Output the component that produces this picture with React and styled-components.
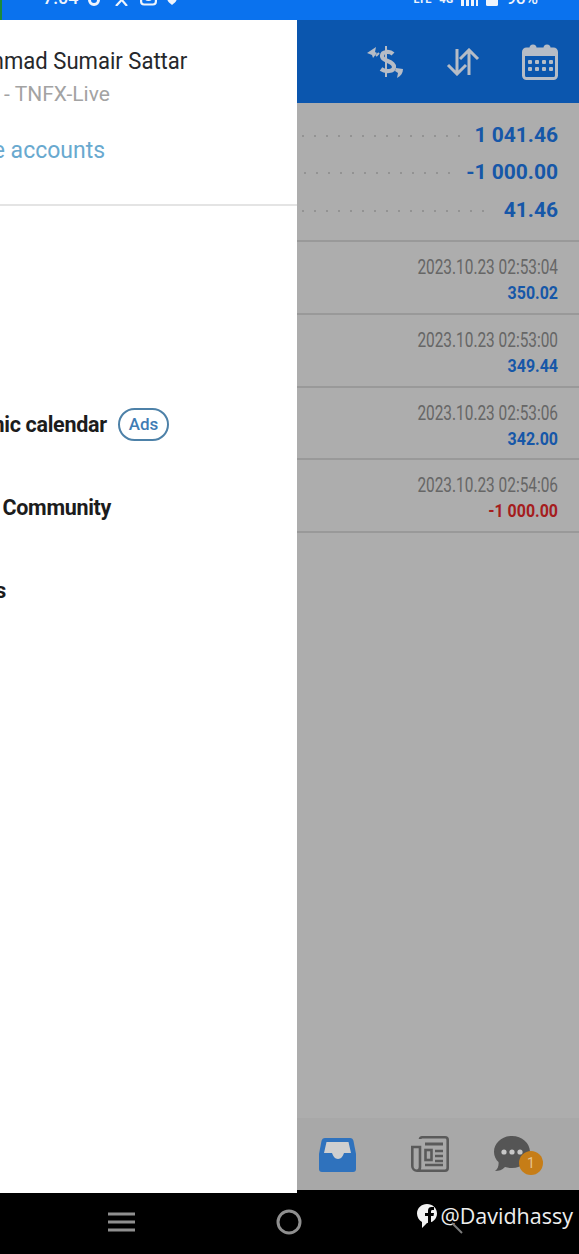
import React from 'react'
import styled, { createGlobalStyle } from 'styled-components'

const GlobalStyle = createGlobalStyle`
  html, body { margin: 0; padding: 0; background: #000; }
  body { font-family: Roboto, "Liberation Sans", sans-serif; }
`

const Screen = styled.div`
  width: 579px;
  height: 1254px;
  overflow: hidden;
  display: flex;
  flex-direction: column;
  background: #000;
`

const StatusBar = styled.div`
  height: 20px;
  flex: none;
  box-sizing: border-box;
  background: #0a72ee;
  border-left: 2px solid #1c8a3c;
  color: #eef4fc;
  display: flex;
  justify-content: space-between;
  overflow: hidden;
`

const StatusGroup = styled.div`
  display: flex;
  align-items: flex-end;
  gap: ${p => p.$right ? 8 : 10}px;
  height: 6px;
  padding: ${p => p.$right ? '0 41px 0 0' : '0 0 0 41px'};
`

const Clock = styled.span`
  font-size: 18px;
  font-weight: 500;
  line-height: 16px;
`

const NetLabel = styled.span`
  font-size: 11px;
  font-weight: 700;
  line-height: 12px;
`

const Percent = styled.span`
  font-size: 17px;
  font-weight: 500;
  line-height: 16px;
`

const Stage = styled.div`
  display: flex;
  height: 1173px;
  flex: none;
  overflow: hidden;
`

const Drawer = styled.aside`
  width: 368px;
  margin-left: -71px;
  flex: none;
  background: #fff;
  display: flex;
  flex-direction: column;
`

const Profile = styled.div`
  height: 186px;
  flex: none;
  border-bottom: 2px solid #e4e4e4;
  box-sizing: border-box;
  padding: 27px 0 0 0;
  margin-bottom: 11px;
  display: flex;
  flex-direction: column;
  align-items: flex-start;
`

const Name = styled.div`
  font-size: 23px;
  line-height: 30px;
  color: #26282b;
  transform: scaleX(.96);
  transform-origin: left;
  white-space: nowrap;
`

const Server = styled.div`
  font-size: 21px;
  line-height: 30px;
  margin: 2px 0 0 -1px;
  color: #a3a3a3;
  white-space: nowrap;
`

const Manage = styled.div`
  font-size: 23px;
  line-height: 30px;
  margin: 27px 0 0 -7px;
  color: #69a9cf;
  white-space: nowrap;
`

const MenuRow = styled.div`
  height: 83px;
  display: flex;
  align-items: center;
  gap: 11px;
  margin-left: ${p => p.$shift || -1}px;
  font-size: 21.5px;
  font-weight: 700;
  letter-spacing: -.3px;
  color: #1c1c1c;
  white-space: nowrap;
`

const Ads = styled.span`
  border: 2px solid #4d81a8;
  border-radius: 17px;
  color: #3f7cb4;
  font-size: 17px;
  font-weight: 500;
  letter-spacing: 0;
  padding: 5px 9px;
  line-height: 19px;
`

const Main = styled.main`
  flex: 1;
  min-width: 0;
  margin-bottom: 3px;
  display: flex;
  flex-direction: column;
  background: #adadad;
`

const Header = styled.header`
  height: 83px;
  flex: none;
  background: #0b56ae;
  display: flex;
  align-items: center;
  justify-content: flex-end;
  gap: 42px;
  padding: 0 21px 0 0;
  box-sizing: border-box;
`

const Summary = styled.section`
  padding: 13px 21px 0 0;
  height: 139px;
  box-sizing: border-box;
  border-bottom: 2px solid #999;
`

const SummaryRow = styled.div`
  display: flex;
  align-items: center;
  height: 37.5px;
`

const Dots = styled.div`
  flex: 1;
  margin: 2px 13px 0 ${p => p.$start}px;
  height: 2px;
  background-image: radial-gradient(circle, #939393 1px, transparent 1.2px);
  background-size: 12px 2px;
`

const SummaryValue = styled.div`
  font-size: 21px;
  font-weight: 700;
  color: #1657a8;
`

const Deal = styled.div`
  height: 72.75px;
  box-sizing: border-box;
  border-bottom: 2px solid #999;
  padding: 13px 21px 0 0;
  text-align: right;
`

const DealTime = styled.div`
  font-size: 19.5px;
  line-height: 25px;
  color: #666;
  transform: scaleX(.79);
  transform-origin: right;
`

const DealValue = styled.div`
  font-size: 19px;
  font-weight: 700;
  line-height: 26px;
  color: ${p => p.$loss ? '#a51d1d' : '#1657a8'};
  transform: scaleX(.84);
  transform-origin: right;
`

const Spacer = styled.div`
  flex: 1;
`

const TabBar = styled.nav`
  height: 72px;
  flex: none;
  background: #a8a8a8;
  display: grid;
  grid-template-columns: 92px 82px 1fr;
  align-items: center;
  padding: 0 0 0 22px;
  box-sizing: border-box;
`

const ChatWrap = styled.div`
  position: relative;
  width: 38px;
  height: 36px;
`

const Badge = styled.span`
  position: absolute;
  right: -12px;
  bottom: -3px;
  width: 24px;
  height: 24px;
  border-radius: 50%;
  background: #c67d17;
  color: #e6c48f;
  font-size: 14px;
  line-height: 24px;
  text-align: center;
`

const NavBar = styled.div`
  flex: 1;
  position: relative;
  display: flex;
  align-items: center;
  padding: 0 0 3px 108px;
  gap: 141px;
`

const Watermark = styled.div`
  position: absolute;
  right: 6px;
  top: 7px;
  display: flex;
  align-items: center;
  gap: 3px;
  color: #eee;
  font-family: "Open Sans", sans-serif;
  font-size: 21.5px;
  line-height: 32px;
`

const SearchHandle = styled.svg`
  position: absolute;
  left: 34px;
  top: 22px;
`

const RingIcon = () => (
  <svg width="12" height="12" viewBox="0 0 12 12" fill="none" stroke="#eef4fc" strokeWidth="3">
    <circle cx="6" cy="6" r="4.5" />
  </svg>
)

const XIcon = () => (
  <svg width="20" height="14" viewBox="0 0 20 14" fill="none" stroke="#eef4fc" strokeWidth="2.2">
    <path d="M5 0l12 14M19 0L6 14" />
  </svg>
)

const CameraIcon = () => (
  <svg width="17" height="14" viewBox="0 0 17 14" fill="none" stroke="#eef4fc" strokeWidth="2.2">
    <rect x="1.1" y="-4" width="14.800" height="16.500" rx="3" />
    <circle cx="8.500" cy="5" r="3" />
  </svg>
)

const ShieldIcon = () => (
  <svg width="10" height="12" viewBox="0 0 10 12">
    <path d="M0 0h10v4c0 3-2.500 5-5 7-2.500-2-5-4-5-7z" fill="#eef4fc" />
  </svg>
)

const SignalIcon = () => (
  <svg width="17" height="12" viewBox="0 0 17 12" fill="#eef4fc">
    <rect x="0" y="6" width="3" height="6" />
    <rect x="5" y="3" width="3" height="9" />
    <rect x="10" y="0" width="3" height="12" />
    <rect x="15" y="0" width="2" height="12" />
  </svg>
)

const BatteryIcon = () => (
  <svg width="12" height="14" viewBox="0 0 12 14">
    <rect width="12" height="14" rx="1.500" fill="#eef4fc" />
  </svg>
)

const DollarIcon = () => (
  <svg width="37" height="32" viewBox="0 0 37 32" fill="none" stroke="#b6bcc6">
    <path d="M0 7l9-6-1 5 2 1-4 5-1-3z" fill="#b6bcc6" stroke="none" />
    <path d="M9 10l3-3" strokeWidth="2" />
    <path d="M26 8c-3-3-11-3-11 2 0 6 12 4 12 11 0 5-9 5-13 2" strokeWidth="4.200" />
    <path d="M19 0v31" strokeWidth="2" />
    <path d="M29 22l7 1c0 4-2 7-6 9l1-5-3-2z" fill="#b6bcc6" stroke="none" />
  </svg>
)

const SortIcon = () => (
  <svg width="34" height="28" viewBox="0 0 34 28" fill="none" stroke="#b6bcc6" strokeWidth="3">
    <path d="M11 1v25M2 17l9 9 9-9" />
    <path d="M23 27V2M14 11l9-9 9 9" />
  </svg>
)

const CalendarIcon = () => (
  <svg width="36" height="36" viewBox="0 0 36 36">
    <rect x="1.500" y="5" width="33" height="29.500" rx="3" fill="none" stroke="#b6bcc6" strokeWidth="3" />
    <rect x="1.500" y="5" width="33" height="7" fill="#b6bcc6" />
    <circle cx="11" cy="4" r="3.500" fill="#b6bcc6" />
    <circle cx="25" cy="4" r="3.500" fill="#b6bcc6" />
    {[18, 25].map(y => [8, 15, 22, 29].map(x => (
      <rect key={x + '-' + y} x={x - 2} y={y - 2} width="4" height="4" rx="1" fill="#b6bcc6" />
    )))}
  </svg>
)

const InboxIcon = () => (
  <svg width="37" height="35" viewBox="0 0 37 35">
    <path d="M6 1h25c2 0 3 1 3.500 3L37 17v15c0 2-1 3-3 3H3c-2 0-3-1-3-3V17L2.500 4C3 2 4 1 6 1z" fill="#2f72bd" />
    <path d="M7.500 5h22l2.500 11h-7c-1 3-3 6-6 6s-5-3-6-6H5z" fill="#cfcfcf" />
  </svg>
)

const NewsIcon = () => (
  <svg width="38" height="36" viewBox="0 0 38 36" fill="none" stroke="#5a5a5a" strokeWidth="2.600">
    <path d="M9 3c0-1 1-1.700 2-1.700h23c1.500 0 2.700 1 2.700 2.700v28c0 1.500-1.200 2.700-2.700 2.700H6c-2.500 0-4.700-2-4.700-4.700V11H9v20c0 2.500-1.500 3.700-3 3.700" />
    <path d="M14 8h18" strokeWidth="3" />
    <rect x="14.500" y="14" width="6" height="10" strokeWidth="2.600" />
    <path d="M24 15h8M24 20h8M24 25h8M14 29h18" strokeWidth="2.600" />
  </svg>
)

const ChatIcon = () => (
  <svg width="38" height="36" viewBox="0 0 38 36">
    <path d="M19 0c10 0 18 7 18 16s-8 16-18 16c-3 0-5-.500-7-1-3 3-6 4-10 4 3-2 4-6 3.500-9C3 24 1 20 1 16 1 7 9 0 19 0z" fill="#555" />
    <circle cx="11" cy="16" r="2.600" fill="#c8c8c8" />
    <circle cx="19" cy="16" r="2.600" fill="#c8c8c8" />
    <circle cx="27" cy="16" r="2.600" fill="#c8c8c8" />
  </svg>
)

const MenuIcon = () => (
  <svg width="27" height="20" viewBox="0 0 27 20" stroke="#8f8f8f" strokeWidth="3">
    <path d="M0 2h27M0 10h27M0 18h27" />
  </svg>
)

const HomeIcon = () => (
  <svg width="26" height="26" viewBox="0 0 26 26" fill="none" stroke="#8f8f8f" strokeWidth="3">
    <circle cx="13" cy="13" r="11" />
  </svg>
)

const FacebookIcon = () => (
  <svg width="20" height="24" viewBox="0 0 20 24">
    <path d="M10 0c5.500 0 10 4 10 9.500S15.500 19 10 19l-5 5v-6C2 16.500 0 13 0 9.500 0 4 4.500 0 10 0z" fill="#f2f2f2" />
    <path d="M11 21V12H8V9h3V6.500C11 4 12.500 3 14.500 3H17v3h-1.500C14.500 6 14 6.500 14 7.500V9h3l-.5 3H14v7z" fill="#000" />
  </svg>
)

const deals = [
  { time: '2023.10.23 02:53:04', value: '350.02' },
  { time: '2023.10.23 02:53:00', value: '349.44' },
  { time: '2023.10.23 02:53:06', value: '342.00' },
  { time: '2023.10.23 02:54:06', value: '-1 000.00', loss: true },
]

const summary = [
  { value: '1 041.46', start: 0 },
  { value: '-1 000.00', start: 2 },
  { value: '41.46', start: 0 },
]

export default function App() {
  return (
    <Screen>
      <GlobalStyle />
      <StatusBar>
        <StatusGroup>
          <Clock>7:04</Clock>
          <RingIcon />
          <XIcon />
          <CameraIcon />
          <ShieldIcon />
        </StatusGroup>
        <StatusGroup $right>
          <NetLabel>LTE</NetLabel>
          <NetLabel>4G</NetLabel>
          <SignalIcon />
          <BatteryIcon />
          <Percent>96%</Percent>
        </StatusGroup>
      </StatusBar>
      <Stage>
        <Drawer>
          <Profile>
            <Name>Muhammad Sumair Sattar</Name>
            <Server>999999 - TNFX-Live</Server>
            <Manage>Manage accounts</Manage>
          </Profile>
          <MenuRow />
          <MenuRow />
          <MenuRow>Economic calendar<Ads>Ads</Ads></MenuRow>
          <MenuRow $shift={12}>MQL5 Community</MenuRow>
          <MenuRow>Settings</MenuRow>
        </Drawer>
        <Main>
          <Header>
            <DollarIcon />
            <SortIcon />
            <CalendarIcon />
          </Header>
          <Summary>
            {summary.map(row => (
              <SummaryRow key={row.value}>
                <Dots $start={row.start} />
                <SummaryValue>{row.value}</SummaryValue>
              </SummaryRow>
            ))}
          </Summary>
          {deals.map(deal => (
            <Deal key={deal.time}>
              <DealTime>{deal.time}</DealTime>
              <DealValue $loss={deal.loss}>{deal.value}</DealValue>
            </Deal>
          ))}
          <Spacer />
          <TabBar>
            <InboxIcon />
            <NewsIcon />
            <ChatWrap>
              <ChatIcon />
              <Badge>1</Badge>
            </ChatWrap>
          </TabBar>
        </Main>
      </Stage>
      <NavBar>
        <MenuIcon />
        <HomeIcon />
        <Watermark>
          <FacebookIcon />
          @Davidhassy
          <SearchHandle width="12" height="12" viewBox="0 0 12 12" stroke="#7d7d7d" strokeWidth="2">
            <path d="M1 1l10 10" />
          </SearchHandle>
        </Watermark>
      </NavBar>
    </Screen>
  )
}
